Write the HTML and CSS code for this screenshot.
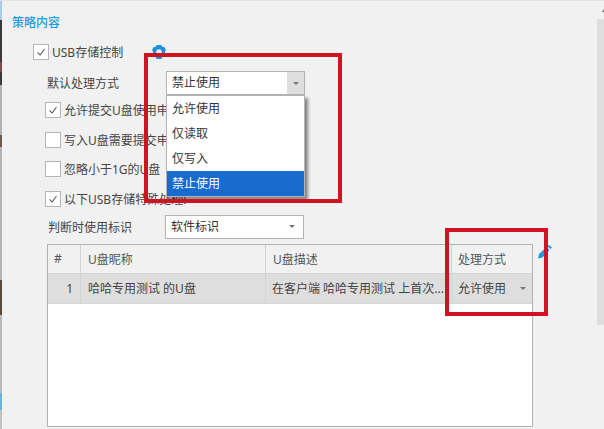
FILE: index.html
```html
<!DOCTYPE html>
<html lang="zh-CN">
<head>
<meta charset="utf-8">
<title>策略内容</title>
<link rel="stylesheet" href="styles.css">
</head>
<body>
<div class="page">
  <div class="strip"></div>
  <main class="content">
    <h2 class="title">策略内容</h2>
    <div class="row usb-row">
      <span class="check"><svg viewBox="0 0 16 16" class="tick"><path d="M4 8.5 7 11.5 12 4.5"/></svg></span>
      <span>USB存储控制</span>
      <svg class="gear" viewBox="0 0 14 14"><path fill-rule="evenodd" d="M4.5 0h5l.6 2 2-.3L14 5l-1.300 2L14 9l-1.900 3.300-2-.3-.6 2h-5l-.6-2-2 .3L0 9l1.300-2L0 5l1.900-3.300 2 .3zM7 4.200a2.800 2.800 0 1 0 0 5.600 2.800 2.800 0 0 0 0-5.600z"/></svg>
    </div>
    <div class="row select-row default-row">
      <span class="field-label">默认处理方式</span>
      <div class="select open">
        <span class="select-value">禁止使用</span>
        <span class="select-btn"><i class="caret"></i></span>
        <ul class="menu">
          <li>允许使用</li>
          <li>仅读取</li>
          <li>仅写入</li>
          <li class="active">禁止使用</li>
        </ul>
      </div>
    </div>
    <div class="options">
      <div class="row opt"><span class="check"><svg viewBox="0 0 16 16" class="tick"><path d="M4 8.500 7 11.500 12 4.500"/></svg></span><span class="clip">允许提交U盘使用申请</span></div>
      <div class="row opt"><span class="check"></span><span class="clip">写入U盘需要提交申请</span></div>
      <div class="row opt"><span class="check"></span><span>忽略小于1G的U盘</span></div>
      <div class="row opt"><span class="check"><svg viewBox="0 0 16 16" class="tick"><path d="M4 8.500 7 11.500 12 4.500"/></svg></span><span>以下USB存储特殊处理:</span></div>
    </div>
    <div class="row select-row id-row">
      <span class="field-label">判断时使用标识</span>
      <div class="select">
        <span class="select-value">软件标识</span>
        <span class="select-plain"><i class="caret"></i></span>
      </div>
    </div>
    <div class="table-wrap">
      <div class="table">
        <div class="cell head hash">#</div>
        <div class="cell head">U盘昵称</div>
        <div class="cell head">U盘描述</div>
        <div class="cell head last">处理方式</div>
        <div class="cell body num">1</div>
        <div class="cell body">哈哈专用测试 的U盘</div>
        <div class="cell body desc">在客户端 哈哈专用测试 上首次...</div>
        <div class="cell body last mode"><span>允许使用</span><i class="caret"></i></div>
      </div>
      <svg class="pencil" viewBox="0 0 14 14"><path d="M0 13.500 1 9 8.500 2 11.500 5 4.500 12.500z"/><path d="M9.500 1 11 0 14 2.500 12.500 4z"/></svg>
    </div>
    <div class="mark mark-a"></div>
    <div class="mark mark-b"></div>
  </main>
  <div class="scrollbar"><i class="scroll-arrow"></i><div class="scroll-thumb"></div></div>
</div>
</body>
</html>
```
FILE: styles.css
```css
* { box-sizing: border-box; }
html, body { margin: 0; padding: 0; }
body {
  font-family: "Noto Sans", "Noto Sans CJK SC", sans-serif;
  font-size: 12px;
  color: #454545;
  background: #f1f1f1;
}
.page {
  display: flex;
  width: 604px;
  height: 429px;
  overflow: hidden;
  background: #f1f1f1;
  border-top: 1px solid #e2e2e2;
}
.strip {
  flex: none;
  width: 2px;
  margin-top: -1px;
  background: linear-gradient(to bottom,
    #a9cbe9 0, #a9cbe9 20px,
    #3a3a3a 20px, #3a3a3a 62px,
    #7a4a50 62px, #7a4a50 72px,
    #3a3a3a 72px, #3a3a3a 85px,
    #b2b2b2 85px, #b2b2b2 135px,
    #6d5a50 135px, #6d5a50 147px,
    #b4b4b4 147px, #b4b4b4 280px,
    #5a4a40 280px, #5a4a40 315px,
    #b9b9b9 315px, #b9b9b9 393px,
    #6bb4dc 393px, #6bb4dc 410px,
    #c2c2c2 410px);
}
.content {
  position: relative;
  flex: 1;
  padding: 0 0 0 10px;
  min-width: 0;
}
.title {
  margin: 13px 0 0;
  height: 18px;
  font-size: 12px;
  line-height: 18px;
  font-weight: 500;
  color: #1b9ce3;
}
.row { display: flex; align-items: center; }
.usb-row {
  height: 16px;
  margin: 12px 0 0 21px;
}
.check {
  flex: none;
  width: 16px;
  height: 16px;
  margin-right: 3px;
  background: #fff;
  border: 1px solid #b5b5b5;
}
.tick { display: block; width: 14px; height: 14px; }
.tick path { fill: none; stroke: #555; stroke-width: 1.200; }
.clip {
  width: 102px;
  overflow: hidden;
  white-space: nowrap;
}
.gear {
  flex: none;
  width: 14px;
  height: 14px;
  margin-left: 29px;
  margin-top: -1px;
  fill: #1b8fdf;
}
.select-row { height: 24px; }
.field-label { flex: none; }
.default-row { margin: 11px 0 0 35px; }
.default-row .field-label { width: 119px; }
.select {
  position: relative;
  display: flex;
  width: 139px;
  height: 24px;
  background: #fff;
  border: 1px solid #b3b3b3;
  line-height: 22px;
  color: #333;
}
.select-value { flex: 1; padding-left: 5px; }
.select-btn, .select-plain {
  display: flex;
  align-items: center;
  justify-content: center;
  flex: none;
  width: 17px;
}
.select-btn { background: #dedede; }
.select-plain { width: 22px; }
.caret {
  display: block;
  width: 0;
  height: 0;
  border-left: 3.500px solid transparent;
  border-right: 3.500px solid transparent;
  border-top: 3.500px solid #777;
}
.menu {
  position: absolute;
  z-index: 2;
  top: 23px;
  left: -1px;
  width: 139px;
  margin: 0;
  padding: 0;
  list-style: none;
  background: #fff;
  border: 1px solid #b3b3b3;
  box-shadow: 3px 3px 3px rgba(0, 0, 0, 0.45);
}
.menu li {
  height: 25px;
  padding-left: 5px;
  line-height: 25px;
  color: #333;
}
.menu .active { background: #1a6bcf; color: #fff; }
.options {
  display: flex;
  flex-direction: column;
  gap: 13.500px;
  margin: 7px 0 0 33px;
}
.opt { height: 16px; }
.id-row { margin: 8px 0 0 36px; }
.id-row .field-label { width: 117px; }
.table-wrap {
  position: relative;
  width: 486px;
  height: 183px;
  margin: 5px 0 0 35px;
}
.table {
  display: grid;
  grid-template-columns: 33px 185px 186px 1fr;
  grid-template-rows: 29px 30px;
  align-content: start;
  height: 183px;
  background: #fff;
  border: 1px solid #b3b3b3;
}
.cell {
  display: flex;
  align-items: center;
  padding-left: 7px;
  white-space: nowrap;
  overflow: hidden;
  border-right: 1px solid #d4d4d4;
  border-bottom: 1px solid #d4d4d4;
}
.head { background: #f1f1f1; color: #555; }
.body { background: #dedede; color: #444; }
.hash { align-items: flex-start; padding-top: 5px; padding-left: 6px; }
.num { justify-content: flex-end; padding-right: 7px; font-size: 12px; }
.last { border-right: 0; padding-left: 6px; }
.mode { justify-content: space-between; padding-right: 6px; }
.desc { padding-left: 6px; }
.pencil {
  position: absolute;
  top: 1px;
  left: 491px;
  width: 14px;
  height: 14px;
  fill: #1b9ce3;
}
.mark {
  position: absolute;
  z-index: 3;
  border: 4px solid #d01323;
  pointer-events: none;
}
.mark-a { left: 142px; top: 52px; width: 198px; height: 150px; }
.mark-b { left: 443px; top: 227px; width: 103px; height: 88px; }
.scrollbar {
  position: relative;
  flex: none;
  width: 7px;
  padding-top: 18px;
}
.scroll-arrow {
  position: absolute;
  top: 8px;
  left: 5px;
  width: 0;
  height: 0;
  border-left: 2px solid transparent;
  border-right: 2px solid transparent;
  border-bottom: 3px solid #666;
}
.scroll-thumb { height: 306px; background: #dedede; }
```
